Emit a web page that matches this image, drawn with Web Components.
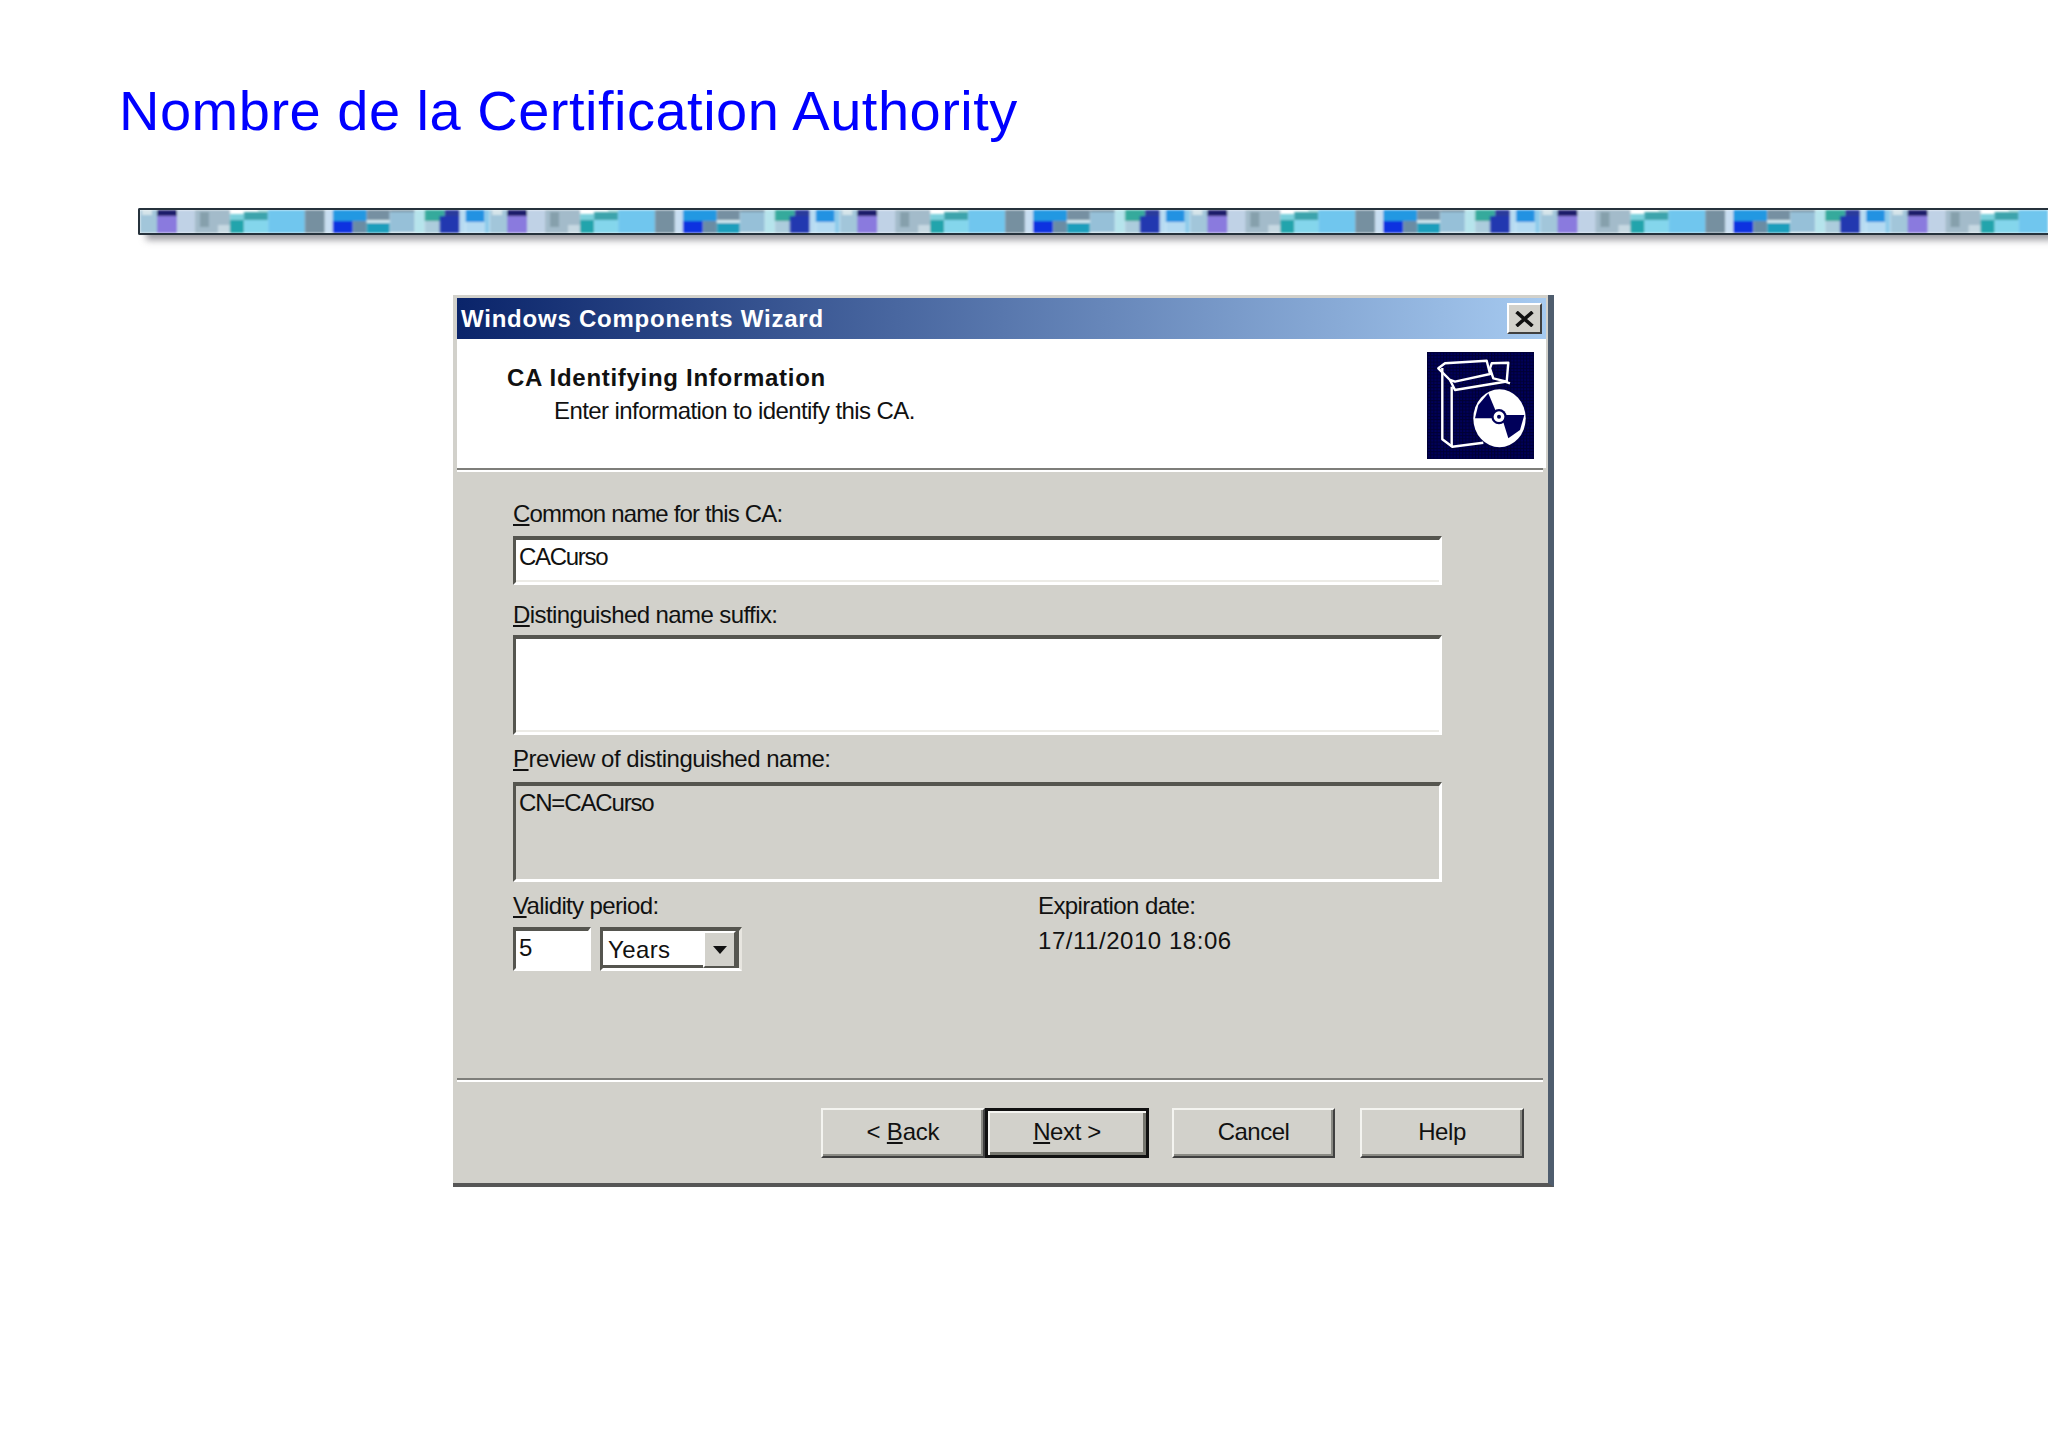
<!DOCTYPE html>
<html lang="en"><head><meta charset="utf-8"><style>
html,body{margin:0;padding:0;background:#fff;}
body{width:2048px;height:1447px;overflow:hidden;font-family:"Liberation Sans",Arial,sans-serif;}
</style></head><body>
<slide-page>
<slide-title>Nombre de la Certification Authority</slide-title>
<pattern-band></pattern-band>
<wizard-dialog>
 <wizard-titlebar>Windows Components Wizard</wizard-titlebar>
 <wizard-header heading="CA Identifying Information" sub="Enter information to identify this CA."></wizard-header>
 <wizard-body>
  <win-label style="letter-spacing:-.84px"><u>C</u>ommon name for this CA:</win-label>
  <sunken-field style="height:49px;margin:7px 0 15px;letter-spacing:-1.3px">CACurso</sunken-field>
  <win-label style="letter-spacing:-.59px"><u>D</u>istinguished name suffix:</win-label>
  <sunken-field style="height:100px;margin:5px 0 9px"></sunken-field>
  <win-label style="letter-spacing:-.49px"><u>P</u>review of distinguished name:</win-label>
  <sunken-field disabled style="height:100px;margin:8px 0 9px;letter-spacing:-1.15px">CN=CACurso</sunken-field>
  <validity-row></validity-row>
 </wizard-body>
 <wizard-footer>
  <win-button style="letter-spacing:-.2px"><span>&lt; <u>B</u>ack</span></win-button>
  <win-button default style="letter-spacing:-.4px"><span><u>N</u>ext &gt;</span></win-button>
  <win-button style="margin-left:23px;width:163px;letter-spacing:-.54px">Cancel</win-button>
  <win-button style="margin-left:25px;letter-spacing:-.43px">Help</win-button>
 </wizard-footer>
</wizard-dialog>
</slide-page>
<script>
const FACE="#d2d1cb";
const def=(name,css,html)=>{customElements.define(name,class extends HTMLElement{
 constructor(){super();const r=this.attachShadow({mode:"open"});r.innerHTML=`<style>${css}</style>${typeof html==="function"?html(this):html}`;}
});};
def("slide-page",":host{display:block}","<slot></slot>");
def("slide-title",":host{display:block;padding:79px 0 0 119px;height:64px;font:56px/64px 'Liberation Sans',Arial,sans-serif;letter-spacing:.5px;color:#0000ff;white-space:nowrap}","<slot></slot>");
const tile=[[0,0,17,27,"#a2c6da"],[2,1,10,6,"#d4e4ea"],[17,0,20,8,"#1b1b6b"],[17,8,20,19,"#8a7ade"],[37,0,18,27,"#c0d2e6"],[55,0,35,27,"#a3bbca"],[60,4,9,15,"#86a0ac"],[78,17,12,10,"#c6d8e2"],[90,12,14,15,"#22a4ac"],[90,6,14,6,"#7cd0dc"],[104,4,24,8,"#3ca4ac"],[118,0,10,4,"#a8e0e0"],[104,12,24,15,"#84d6ec"],[128,0,37,27,"#70c6ee"],[165,0,20,27,"#7690a0"],[185,0,8,27,"#c8def2"],[193,0,34,13,"#2298e2"],[193,13,20,14,"#1030e0"],[213,13,14,14,"#6a8ca4"],[227,0,23,12,"#7690a2"],[227,12,23,3,"#d2e8f0"],[227,15,23,12,"#1f9ebc"],[250,0,25,4,"#7690a0"],[250,4,25,20,"#96c0d8"],[250,24,25,3,"#dcecf2"],[275,0,10,27,"#b6e4ec"],[285,0,20,13,"#34aa9c"],[285,13,20,14,"#acccdc"],[305,0,15,8,"#2a3a9c"],[300,8,20,19,"#2438b0"],[320,0,6,27,"#b8dcf2"],[326,0,19,14,"#2292e2"],[326,14,19,13,"#b4daf2"],[345,0,5,27,"#8ccaea"]];
def("pattern-band",":host{display:block;margin:65px 0 0 138px;height:27px;box-sizing:border-box;border:2px solid #26323c;border-right:0;border-radius:2px 0 0 2px;box-shadow:7px 6px 7px -1px rgba(90,90,100,.6)} svg{display:block;width:100%;height:100%}",
`<svg viewBox="0 0 1910 23" preserveAspectRatio="none" aria-hidden="true"><defs><filter id="b" x="0" y="0" width="100%" height="100%"><feGaussianBlur stdDeviation="1.2"/></filter><pattern id="p" width="350.5" height="27" patternUnits="userSpaceOnUse" y="-2">${tile.map(t=>`<rect x="${t[0]}" y="${t[1]}" width="${t[2]}" height="${t[3]}" fill="${t[4]}"/>`).join("")}</pattern></defs><rect width="1910" height="23" fill="url(#p)" filter="url(#b)"/></svg>`);
def("wizard-dialog",`:host{display:flex;flex-direction:column;box-sizing:border-box;margin:60px 0 0 453px;width:1101px;height:892px;background:${FACE};padding:3px 2px 0 4px;border-right:6px solid #4f5d6e;border-bottom:4px solid #565656;font:24px/30px 'Liberation Sans',Arial,sans-serif;color:#111}`,"<slot></slot>");
def("wizard-titlebar",`:host{display:flex;align-items:center;justify-content:space-between;height:41px;padding:0 4px 0 4px;background:linear-gradient(90deg,#0a246a,#a6caf0);color:#fff;font-weight:700;letter-spacing:.77px}.x{box-sizing:border-box;width:35px;height:31px;background:${FACE};border:2px solid;border-color:#fff #404040 #404040 #fff;display:flex;align-items:center;justify-content:center;letter-spacing:0}svg{display:block}`,
`<span><slot></slot></span><span class="x"><svg width="19" height="16" viewBox="0 0 19 16" aria-hidden="true"><path d="M1.5 1l16 14M17.5 1l-16 14" stroke="#111" stroke-width="3.6" fill="none"/></svg></span>`);
const icon=`<svg width="107" height="107" viewBox="0 0 107 107" aria-hidden="true"><defs><pattern id="g" width="3.2" height="3.2" patternUnits="userSpaceOnUse"><rect width="3.2" height="3.2" fill="#00005a"/><rect width="1" height="3.2" fill="#000034"/><rect width="3.2" height="1" fill="#000034"/></pattern></defs><rect width="107" height="107" fill="url(#g)"/>
<g fill="none" stroke="#fff" stroke-width="2.4" stroke-linejoin="round"><path d="M11.3 16.3L18 11.3l41.7-2.6L63 22l-35 7.7-5 -1.7z"/><path d="M64.7 11.3l16.6-.6-1.6 19-13.4-3.4L63 16.3z"/><path d="M23 28l5 10 50-8.3 5 1.6"/><path d="M15.3 16v71.3l10 7.4 31-4"/><path d="M24.7 34.7v60"/></g>
<ellipse cx="72.5" cy="66.3" rx="26.2" ry="29" fill="#fff"/><g fill="#00005a"><path d="M48 66.3L51.3 53 61.3 41.3 69.7 61.3l-1 5z"/><path d="M78 63h19.3L93 78l-11.7 8.3-5-16z"/></g><circle cx="72" cy="64.7" r="7.6" fill="#00005a"/><circle cx="72" cy="64.7" r="5.4" fill="#fff"/><circle cx="72" cy="64.7" r="2" fill="#00005a"/></svg>`;
def("wizard-header",":host{display:flex;justify-content:space-between;height:129px;background:#fff;padding:0 12px 0 50px;position:relative}.t{padding-top:24px}.h{font-weight:700;letter-spacing:.71px;line-height:30px}.s{padding-left:47px;margin-top:3px;letter-spacing:-.58px}.i{padding-top:13px}.r{position:absolute;left:0;right:3px;bottom:-4px;height:2px;background:#7e7e7a;border-bottom:2px solid #fff}",
e=>`<div class="t"><div class="h">${e.getAttribute("heading")}</div><div class="s">${e.getAttribute("sub")}</div></div><div class="i">${icon}</div><div class="r"></div>`);
def("wizard-body",":host{display:block;flex:1;padding:31px 0 0 56px}","<slot></slot>");
def("win-label",":host{display:block;white-space:nowrap;height:30px;line-height:30px}","<slot></slot>");
def("sunken-field",`:host{display:block;box-sizing:border-box;width:929px;background:#fff;border-style:solid;border-width:4px 3px 3px 3px;border-color:#55554f #fff #fff #55554f;padding:2px 0 0 3px;box-shadow:inset 0 -2px #ecebe6}:host([disabled]){background:${FACE};box-shadow:none}`,"<slot></slot>");
def("validity-row",`:host{display:grid;grid-template-columns:525px auto;grid-template-rows:30px 44px;row-gap:6px}.v{letter-spacing:-.64px}.e{letter-spacing:-.59px}.d{letter-spacing:.54px;margin-top:-1px}.n{display:flex;gap:9px}.b,.c{box-sizing:border-box;height:44px;background:#fff;border-style:solid;border-width:4px 3px 3px 3px;border-color:#55554f #fff #fff #55554f}.b{width:78px;padding:2px 0 0 3px}.c{width:142px;padding-left:5px;display:flex;justify-content:space-between;border-color:#55554f #e8e6e0 #fff #55554f;box-shadow:inset -3px -3px #55554f}.y{padding-top:4px;letter-spacing:.4px}.a{box-sizing:border-box;width:33px;height:37px;margin:0 3px 0 0;background:${FACE};border:2px solid;border-color:#fff #55554f #55554f #fff;display:flex;align-items:center;justify-content:center}u{text-underline-offset:2px}`,
`<div class="v"><u>V</u>alidity period:</div><div class="e">Expiration date:</div><div class="n"><div class="b">5</div><div class="c"><span class="y">Years</span><span class="a"><svg width="14" height="8" viewBox="0 0 14 8" aria-hidden="true"><path d="M0 0h14L7 8z" fill="#111"/></svg></span></div></div><div class="d">17/11/2010 18:06</div>`);
def("wizard-footer",":host{display:flex;justify-content:flex-end;height:105px;box-sizing:border-box;padding:28px 19px 0 0;margin-right:3px;border-top:2px solid #7e7e7a;position:relative} :host::before{content:'';position:absolute;left:0;right:0;top:0;height:2px;background:#fff}","<slot></slot>");
def("win-button",`:host{display:flex;align-items:center;justify-content:center;box-sizing:border-box;width:164px;height:50px;padding-bottom:2px;background:${FACE};border:2px solid;border-color:#f4f4f0 #404040 #404040 #f4f4f0;box-shadow:inset -2px -2px #8a8a84}:host([default]){border:3px solid #111;box-shadow:inset 2px 2px #f4f4f0,inset -3px -3px #77776f}`,"<slot></slot>");
</script>
</body></html>
